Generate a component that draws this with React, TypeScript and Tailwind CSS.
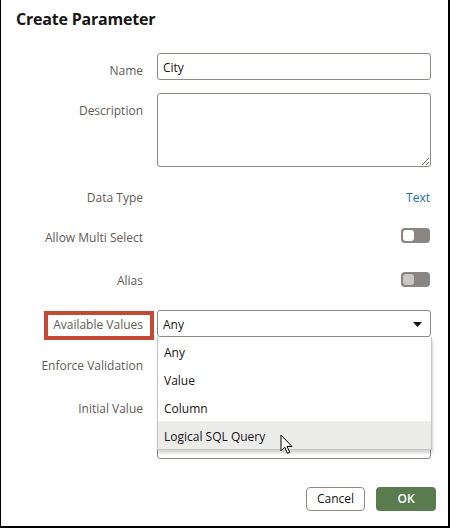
import type { ReactNode } from 'react'

const font = { fontFamily: '"Open Sans", "Noto Sans", sans-serif' }

function Row({
  label,
  className,
  labelClass = 'pt-[10px]',
  children,
}: {
  label: ReactNode
  className: string
  labelClass?: string
  children?: ReactNode
}) {
  return (
    <div className={`flex ${className}`}>
      <div className={`w-[142px] flex justify-end text-[12px] leading-4 text-[#615b56] ${labelClass}`}>{label}</div>
      <div className="ml-[14px] w-[274px]">{children}</div>
    </div>
  )
}

function Toggle({ knob }: { knob: string }) {
  return (
    <div className="flex justify-end pr-[1px] pt-2">
      <div className="w-[29px] h-[15px] rounded-[4px] bg-[#8b8581] flex items-center">
        <div className={`ml-[2px] w-[11px] h-[11px] rounded-[3px] ${knob}`} />
      </div>
    </div>
  )
}

const options = ['Any', 'Value', 'Column', 'Logical SQL Query']

export default function App() {
  return (
    <div
      style={font}
      className="relative w-[450px] h-[528px] bg-white border-l border-r-2 border-b-2 border-black flex flex-col text-[#161513]"
    >
      <h1 className="pl-[15px] pt-2 text-[16px] leading-[22px] font-bold tracking-[-0.2px]">Create Parameter</h1>

      <Row label="Name" className="mt-[23px] h-[27px]">
        <input
          readOnly
          value="City"
          className="w-full h-[27px] px-[5px] pt-[2px] text-[12px] border border-[#8f8a86] rounded-[3px] outline-none"
        />
      </Row>

      <Row label="Description" className="mt-[13px] h-[74px]">
        <textarea className="block w-full h-[74px] border border-[#8f8a86] rounded-[3px] outline-none" />
      </Row>

      <Row label="Data Type" labelClass="pt-[9px]" className="mt-[14px] h-[27px]">
        <div className="pt-[9px] pr-[1px] text-right text-[12px] leading-4 text-[#1f6ea6]">Text</div>
      </Row>

      <Row label="Allow Multi Select" className="mt-[12px] h-[27px]">
        <Toggle knob="bg-white" />
      </Row>

      <Row label="Alias" labelClass="pt-[9px]" className="mt-[17px] h-[27px]">
        <Toggle knob="bg-[#c9c8c7]" />
      </Row>

      <Row
        label={
          <span className="inline-block h-[29px] -mr-[11px] border-4 border-[#c44a36] pl-[5px] pr-[7px] pt-[2px] leading-4">
            Available Values
          </span>
        }
        labelClass="pt-[1px]"
        className="mt-[19px] h-[27px]"
      >
        <div className="h-[27px] px-[5px] pt-[2px] border border-[#8f8a86] rounded-[3px] flex items-center justify-between text-[12px]">
          <span>Any</span>
          <svg width="9" height="5" viewBox="0 0 9 5" className="mr-[3px]">
            <path d="M0 0h9L4.5 5z" fill="#161513" />
          </svg>
        </div>
      </Row>

      <Row label="Enforce Validation" labelClass="pt-2" className="mt-[13px] h-[27px]" />

      <Row label="Initial Value" labelClass="pt-[9px]" className="mt-[15px] h-[67px]">
        <div className="h-[67px] border border-[#8f8a86] rounded-[3px]" />
      </Row>

      <div className="mt-auto mb-[15px] flex justify-end gap-[11px] pr-[12px]">
        <button className="w-[59px] h-[24px] rounded-[4px] border border-[#8f8a86] bg-white text-[12px]">Cancel</button>
        <button className="w-[60px] h-[24px] rounded-[4px] bg-[#5a7b4e] text-white text-[12px] font-semibold">OK</button>
      </div>

      {/* open list for Available Values */}
      <div className="absolute left-[156px] top-[337px] w-[275px] border border-[#c9c7c5] border-t-0 bg-white shadow-[1px_3px_3px_rgba(0,0,0,0.18)]">
        {options.map((o, i) => (
          <div
            key={o}
            className={`h-[28px] pl-[6px] pt-[8px] text-[12px] leading-4 ${i === 3 ? 'bg-[#ececeb]' : ''}`}
          >
            {o}
          </div>
        ))}
      </div>

      {/* mouse pointer */}
      <svg width="14" height="21" viewBox="0 0 14 21" className="absolute left-[279px] top-[434px]">
        <path d="M1 1v16l3.8-3.7 2.7 6 2.2-1-2.7-5.8H12z" fill="white" stroke="black" strokeWidth="1" strokeLinejoin="round" />
      </svg>
    </div>
  )
}
